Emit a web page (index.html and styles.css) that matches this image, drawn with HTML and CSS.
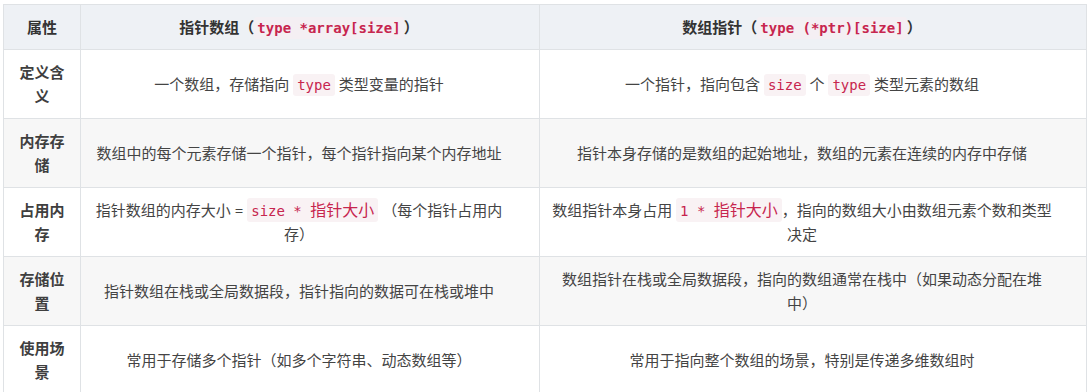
FILE: index.html
```html
<!DOCTYPE html>
<html lang="zh">
<head>
<meta charset="utf-8">
<link rel="stylesheet" href="styles.css">
</head>
<body>
<table class="cmp">
  <colgroup>
    <col class="c1">
    <col class="c2">
    <col class="c3">
  </colgroup>
  <thead>
    <tr>
      <th>属性</th>
      <th>指针数组（<code>type *array[size]</code>）</th>
      <th>数组指针（<code>type (*ptr)[size]</code>）</th>
    </tr>
  </thead>
  <tbody>
    <tr>
      <td class="key">定义含义</td>
      <td>一个数组，存储指向 <code>type</code> 类型变量的指针</td>
      <td>一个指针，指向包含 <code>size</code> 个 <code>type</code> 类型元素的数组</td>
    </tr>
    <tr>
      <td class="key">内存存储</td>
      <td>数组中的每个元素存储一个指针，每个指针指向某个内存地址</td>
      <td>指针本身存储的是数组的起始地址，数组的元素在连续的内存中存储</td>
    </tr>
    <tr>
      <td class="key">占用内存</td>
      <td>指针数组的内存大小 = <code>size * <span class="zh">指针大小</span></code> （每个指针占用内存）</td>
      <td>数组指针本身占用 <code>1 * <span class="zh">指针大小</span></code>，指向的数组大小由数组元素个数和类型决定</td>
    </tr>
    <tr>
      <td class="key">存储位置</td>
      <td>指针数组在栈或全局数据段，指针指向的数据可在栈或堆中</td>
      <td>数组指针在栈或全局数据段，指向的数组通常在栈中（如果动态分配在堆中）</td>
    </tr>
    <tr>
      <td class="key">使用场景</td>
      <td>常用于存储多个指针（如多个字符串、动态数组等）</td>
      <td>常用于指向整个数组的场景，特别是传递多维数组时</td>
    </tr>
  </tbody>
</table>
</body>
</html>
```

FILE: styles.css
```css
html, body {
  margin: 0;
  padding: 0;
  background: #ffffff;
}

body {
  padding: 4px 0 0 3px;
  font-family: "Noto Sans", "Noto Sans CJK SC", sans-serif;
  font-size: 15px;
  color: #444444;
  text-spacing-trim: space-all;
}

.cmp {
  border-collapse: collapse;
  table-layout: fixed;
  width: 1083px;
}

.c1 { width: 77px; }
.c2 { width: 459px; }
.c3 { width: 547px; }

.cmp th,
.cmp td {
  border: 1px solid #dfe2e5;
  padding: 10px 15px;
  line-height: 24px;
  text-align: center;
  vertical-align: middle;
}

.cmp th + th,
.cmp td + td {
  padding: 10px 31px 10px 9px;
}

.cmp th {
  background: #eef1f5;
  color: #333333;
  font-weight: bold;
  height: 23px;
}

.cmp td {
  height: 47px;
}

.cmp tbody tr:nth-child(even) td {
  background: #f7f7f7;
}

.cmp td.key {
  font-weight: bold;
  color: #3f3f3f;
}

code {
  display: inline-block;
  font-family: "DejaVu Sans Mono", "Noto Sans CJK SC", monospace;
  font-size: 14px;
  line-height: 18px;
  color: #c7254e;
  background: #f9f2f4;
  padding: 2px 4px;
  border-radius: 3px;
}

code .zh {
  font-family: "Noto Sans CJK SC", sans-serif;
  font-size: 16px;
}

th code {
  font-weight: bold;
  background: #f4eff3;
  padding: 2px 3px;
}
```
